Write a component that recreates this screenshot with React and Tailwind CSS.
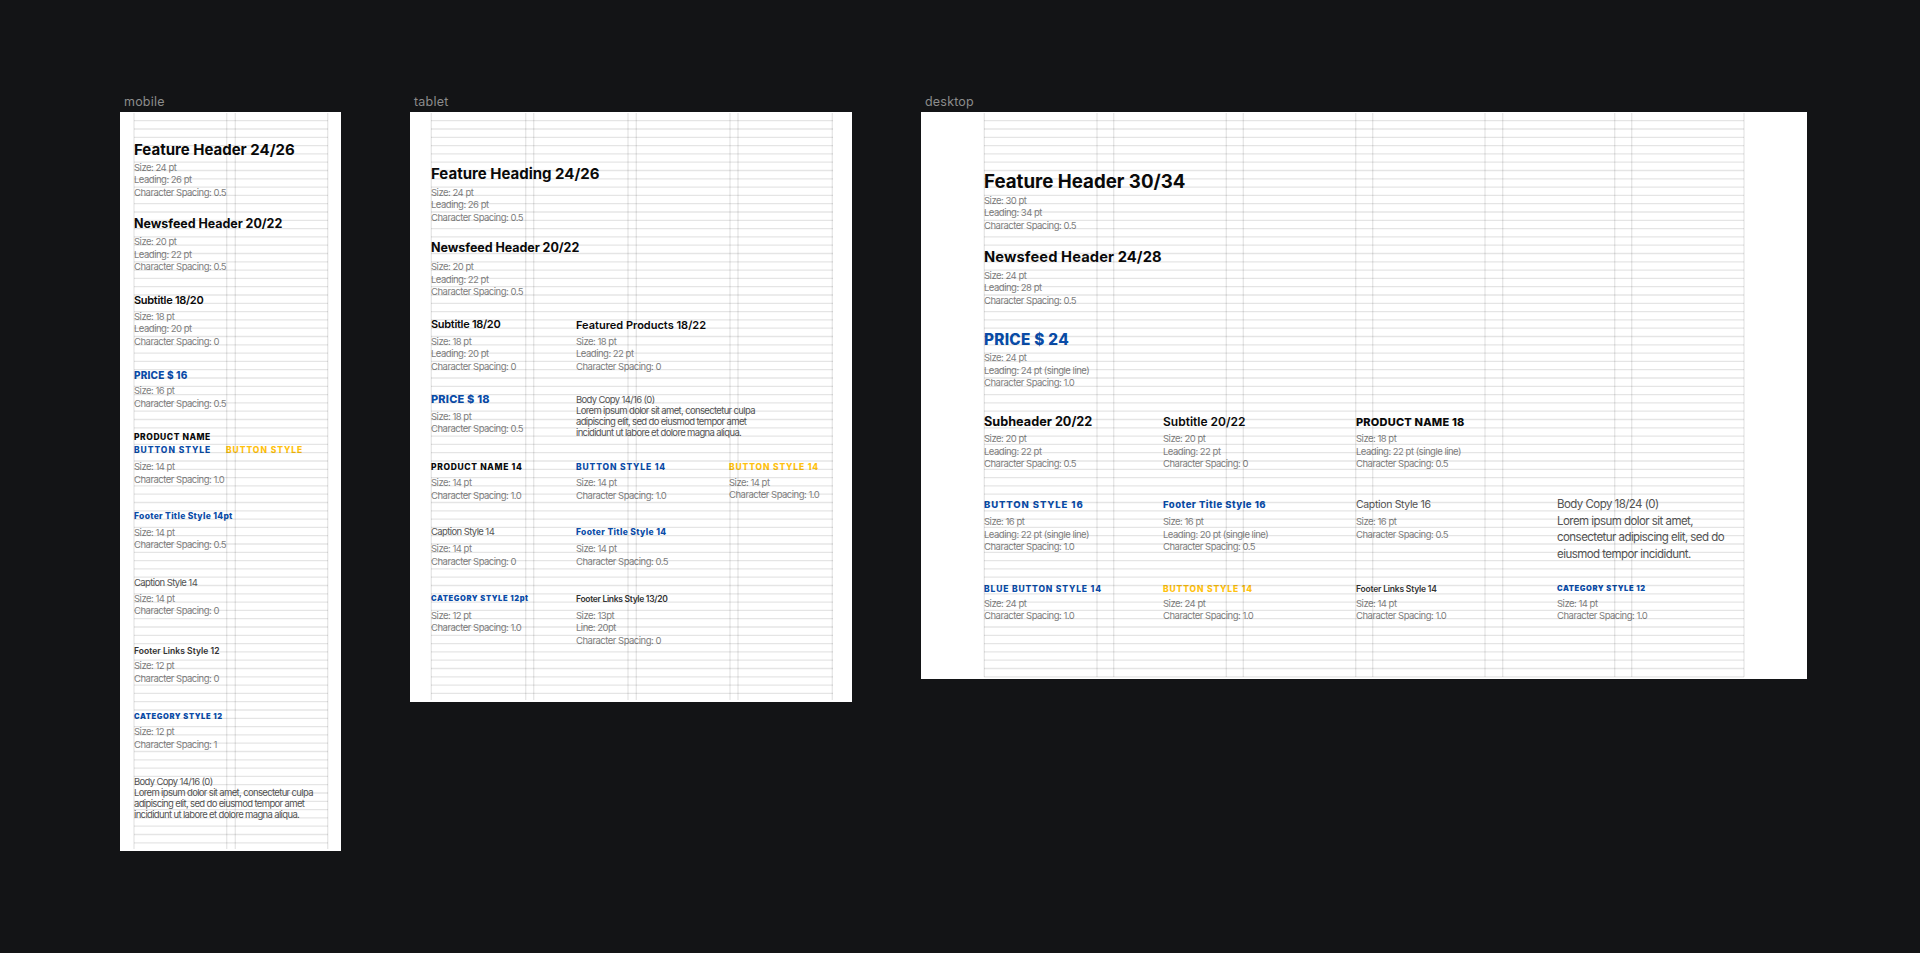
import React from 'react';

const SPEC = 'text-[9.5px] leading-[12.4px] tracking-[-0.5px] text-[#808080]';
const BODY_SM = 'whitespace-nowrap text-[9.5px] leading-[11px] tracking-[-0.65px] text-[#555]';

// Title styles, one per entry on the sheet
const feature24 = 'text-[15px] leading-[20px] font-bold text-[#0a0a0a]';
const feature30 = 'text-[18.7px] leading-[24px] font-bold text-[#0a0a0a]';
const news20 = 'text-[12.5px] leading-[20px] font-bold tracking-[-0.05px] text-[#0a0a0a]';
const news24 = 'text-[14.7px] leading-[24px] font-bold tracking-[0.1px] text-[#0a0a0a]';
const sub18 = 'text-[11px] leading-[20px] font-semibold tracking-[-0.3px] text-[#0a0a0a]';
const featured18 = 'text-[11px] leading-[20px] font-semibold text-[#0a0a0a]';
const subheader20 = 'text-[12.7px] leading-[20px] font-bold text-[#0a0a0a]';
const sub20 = 'text-[12px] leading-[20px] font-semibold text-[#0a0a0a]';
const price16 = 'text-[10px] leading-[20px] font-extrabold tracking-[0.2px] text-[#0a4ca8]';
const price18 = 'text-[11px] leading-[20px] font-extrabold tracking-[0.2px] text-[#0a4ca8]';
const price24 = 'text-[15.3px] leading-[24px] font-extrabold tracking-[0.3px] text-[#0a4ca8]';
const caps = 'text-[8.5px] leading-[13px] font-extrabold tracking-[0.55px]';
const button = 'text-[8.5px] leading-[13px] font-extrabold tracking-[0.95px]';
const caps16 = 'text-[8.5px] leading-[16px] font-extrabold tracking-[0.65px]';
const button16 = 'text-[8.5px] leading-[16px] font-extrabold tracking-[0.85px]';
const footerTitle = 'text-[8.5px] leading-[20px] font-extrabold tracking-[0.3px] text-[#0a4ca8]';
const footerTitle16 = 'text-[8.5px] leading-[16px] font-extrabold tracking-[0.35px] text-[#0a4ca8]';
const caption = 'text-[9.5px] leading-[20px] tracking-[-0.6px] text-[#555]';
const caption16 = 'text-[9.5px] leading-[16px] tracking-[-0.6px] text-[#555]';
const footerLinks = 'text-[8.5px] leading-[16px] font-semibold tracking-[0.05px] text-[#333]';
const footerLinksWide = 'text-[8.5px] leading-[16px] font-semibold tracking-[-0.3px] text-[#333]';
const footerLinksDesk = 'text-[8.5px] leading-[16px] font-semibold tracking-[-0.2px] text-[#333]';
const category = 'text-[7.5px] leading-[16px] font-black tracking-[0.6px] text-[#0a4ca8]';

function GridLines({ width, height, columns, rows, left, right }) {
  const lines = Array.from({ length: rows }, (_, i) => 8.7 + i * 8.3);
  return (
    <svg className="absolute inset-0 pointer-events-none" width={width} height={height}>
      {lines.map((y) => (
        <line key={y} x1={left} x2={right} y1={y} y2={y} stroke="#000" strokeOpacity="0.1" strokeWidth="1.3" />
      ))}
      {columns.map((x) => (
        <line key={x} x1={x} x2={x} y1={1} y2={height - 2} stroke="#000" strokeOpacity="0.1" strokeWidth="1.3" />
      ))}
    </svg>
  );
}

function Style({ title, titleClass, specs, className = '', specClass = '' }) {
  return (
    <div className={className}>
      <div className={`whitespace-nowrap ${titleClass}`}>{title}</div>
      <div className={specClass}>
        {specs.map((s, i) => (
          <div key={i} className={`whitespace-nowrap ${SPEC}`}>{s}</div>
        ))}
      </div>
    </div>
  );
}

function Mobile() {
  return (
    <div className="pl-[14px] pt-[28px]">
      <Style title="Feature Header 24/26" titleClass={feature24} specClass="mt-[2px]"
        specs={['Size: 24 pt', 'Leading: 26 pt', 'Character Spacing: 0.5']} />
      <Style title="Newsfeed Header 20/22" titleClass={news20} className="mt-[15px]" specClass="mt-[2px]"
        specs={['Size: 20 pt', 'Leading: 22 pt', 'Character Spacing: 0.5']} />
      <Style title="Subtitle 18/20" titleClass={sub18} className="mt-[16.5px]" specClass="mt-[1px]"
        specs={['Size: 18 pt', 'Leading: 20 pt', 'Character Spacing: 0']} />
      <Style title="PRICE $ 16" titleClass={price16} className="mt-[17px]"
        specs={['Size: 16 pt', 'Character Spacing: 0.5']} />
      <div className="mt-[21.2px]">
        <div className={`${caps} text-[#0a0a0a]`}>PRODUCT NAME</div>
        <div className="flex">
          <div className={`w-[92px] ${button} text-[#0a4ca8]`}>BUTTON STYLE</div>
          <div className={`${button} text-[#ffc20e]`}>BUTTON STYLE</div>
        </div>
        <div className="mt-[4px]">
          <div className={SPEC}>Size: 14 pt</div>
          <div className={SPEC}>Character Spacing: 1.0</div>
        </div>
      </div>
      <Style title="Footer Title Style 14pt" titleClass={footerTitle} className="mt-[20px]" specClass="mt-[1px]"
        specs={['Size: 14 pt', 'Character Spacing: 0.5']} />
      <Style title="Caption Style 14" titleClass={caption} className="mt-[21px]"
        specs={['Size: 14 pt', 'Character Spacing: 0']} />
      <Style title="Footer Links Style 12" titleClass={footerLinks} className="mt-[25px]" specClass="mt-[1.5px]"
        specs={['Size: 12 pt', 'Character Spacing: 0']} />
      <Style title="CATEGORY STYLE 12" titleClass={category} className="mt-[24px]" specClass="mt-[1.5px]"
        specs={['Size: 12 pt', 'Character Spacing: 1']} />
      <div className={`mt-[25px] ${BODY_SM}`}>
        <div>Body Copy 14/16 (0)</div>
        <div>Lorem ipsum dolor sit amet, consectetur culpa</div>
        <div>adipiscing elit, sed do eiusmod tempor amet</div>
        <div>incididunt ut labore et dolore magna aliqua.</div>
      </div>
    </div>
  );
}

function Tablet() {
  return (
    <div className="pl-[21px] pt-[51.7px]">
      <Style title="Feature Heading 24/26" titleClass={feature24} specClass="mt-[3px]"
        specs={['Size: 24 pt', 'Leading: 26 pt', 'Character Spacing: 0.5']} />
      <Style title="Newsfeed Header 20/22" titleClass={news20} className="mt-[14.5px]" specClass="mt-[3px]"
        specs={['Size: 20 pt', 'Leading: 22 pt', 'Character Spacing: 0.5']} />
      <div className="grid grid-cols-[145px_153px_1fr] mt-[15.4px]">
        <Style title="Subtitle 18/20" titleClass={sub18} specClass="mt-[2px]"
          specs={['Size: 18 pt', 'Leading: 20 pt', 'Character Spacing: 0']} />
        <Style title="Featured Products 18/22" titleClass={featured18} className="col-span-2 mt-[1px]" specClass="mt-[1px]"
          specs={['Size: 18 pt', 'Leading: 22 pt', 'Character Spacing: 0']} />
      </div>
      <div className="grid grid-cols-[145px_153px_1fr] mt-[16px]">
        <Style title="PRICE $ 18" titleClass={price18} specClass="mt-[1.5px]"
          specs={['Size: 18 pt', 'Character Spacing: 0.5']} />
        <div className={`col-span-2 mt-[5px] ${BODY_SM}`}>
          <div>Body Copy 14/16 (0)</div>
          <div>Lorem ipsum dolor sit amet, consectetur culpa</div>
          <div>adipiscing elit, sed do eiusmod tempor amet</div>
          <div>incididunt ut labore et dolore magna aliqua.</div>
        </div>
      </div>
      <div className="grid grid-cols-[145px_153px_1fr] mt-[20.6px]">
        <Style title="PRODUCT NAME 14" titleClass={`${caps16} text-[#0a0a0a]`} specClass="mt-[2.5px]"
          specs={['Size: 14 pt', 'Character Spacing: 1.0']} />
        <Style title="BUTTON STYLE 14" titleClass={`${button16} text-[#0a4ca8]`} specClass="mt-[2.5px]"
          specs={['Size: 14 pt', 'Character Spacing: 1.0']} />
        <Style title="BUTTON STYLE 14" titleClass={`${button16} text-[#ffc20e]`} specClass="mt-[2px]"
          specs={['Size: 14 pt', 'Character Spacing: 1.0']} />
      </div>
      <div className="grid grid-cols-[145px_153px_1fr] mt-[22.3px]">
        <Style title="Caption Style 14" titleClass={caption16} specClass="mt-[3px]"
          specs={['Size: 14 pt', 'Character Spacing: 0']} />
        <Style title="Footer Title Style 14" titleClass={footerTitle16} specClass="mt-[3px]"
          specs={['Size: 14 pt', 'Character Spacing: 0.5']} />
      </div>
      <div className="grid grid-cols-[145px_153px_1fr] mt-[23px]">
        <Style title="CATEGORY STYLE 12pt" titleClass={category} specClass="mt-[2.5px]"
          specs={['Size: 12 pt', 'Character Spacing: 1.0']} />
        <Style title="Footer Links Style 13/20" titleClass={footerLinksWide} specClass="mt-[2.5px]"
          specs={['Size: 13pt', 'Line: 20pt', 'Character Spacing: 0']} />
      </div>
    </div>
  );
}

function Desktop() {
  return (
    <div className="pl-[63px] pt-[57.7px]">
      <Style title="Feature Header 30/34" titleClass={feature30} specClass="mt-[1px]"
        specs={['Size: 30 pt', 'Leading: 34 pt', 'Character Spacing: 0.5']} />
      <Style title="Newsfeed Header 24/28" titleClass={news24} className="mt-[13.3px]" specClass="mt-[0.5px]"
        specs={['Size: 24 pt', 'Leading: 28 pt', 'Character Spacing: 0.5']} />
      <Style title="PRICE $ 24" titleClass={price24} className="mt-[20.7px]" specClass="mt-[0.5px]"
        specs={['Size: 24 pt', 'Leading: 24 pt (single line)', 'Character Spacing: 1.0']} />
      <div className="grid grid-cols-[179px_193px_201px_1fr] mt-[22.4px]">
        <Style title="Subheader 20/22" titleClass={subheader20} specClass="mt-[1.5px]"
          specs={['Size: 20 pt', 'Leading: 22 pt', 'Character Spacing: 0.5']} />
        <Style title="Subtitle 20/22" titleClass={sub20} specClass="mt-[1.5px]"
          specs={['Size: 20 pt', 'Leading: 22 pt', 'Character Spacing: 0']} />
        <Style title="PRODUCT NAME 18" titleClass="text-[11px] leading-[20px] font-extrabold tracking-[0.2px] text-[#0a0a0a]" specClass="mt-[1.5px]"
          specs={['Size: 18 pt', 'Leading: 22 pt (single line)', 'Character Spacing: 0.5']} />
      </div>
      <div className="grid grid-cols-[179px_193px_201px_1fr] mt-[25px]">
        <Style title="BUTTON STYLE 16" titleClass="text-[9.5px] leading-[20px] font-extrabold tracking-[0.9px] text-[#0a4ca8]" specClass="mt-[1px]"
          specs={['Size: 16 pt', 'Leading: 22 pt (single line)', 'Character Spacing: 1.0']} />
        <Style title="Footer Title Style 16" titleClass="text-[9.5px] leading-[20px] font-extrabold tracking-[0.5px] text-[#0a4ca8]" specClass="mt-[1px]"
          specs={['Size: 16 pt', 'Leading: 20 pt (single line)', 'Character Spacing: 0.5']} />
        <Style title="Caption Style 16" titleClass="text-[10.5px] leading-[20px] tracking-[-0.35px] text-[#555]" specClass="mt-[1px]"
          specs={['Size: 16 pt', 'Character Spacing: 0.5']} />
        <div className="mt-[0.7px] whitespace-nowrap text-[11.5px] leading-[16.6px] tracking-[-0.55px] text-[#555]">
          <div>Body Copy 18/24 (0)</div>
          <div>Lorem ipsum dolor sit amet,</div>
          <div>consectetur adipiscing elit, sed do</div>
          <div>eiusmod tempor incididunt.</div>
        </div>
      </div>
      <div className="grid grid-cols-[179px_193px_201px_1fr] mt-[18px]">
        <Style title="BLUE BUTTON STYLE 14" titleClass={`${button16} text-[#0a4ca8]`} specClass="mt-[1.5px]"
          specs={['Size: 24 pt', 'Character Spacing: 1.0']} />
        <Style title="BUTTON STYLE 14" titleClass={`${button16} text-[#ffc20e]`} specClass="mt-[1.5px]"
          specs={['Size: 24 pt', 'Character Spacing: 1.0']} />
        <Style title="Footer Links Style 14" titleClass={footerLinksDesk} specClass="mt-[1.5px]"
          specs={['Size: 14 pt', 'Character Spacing: 1.0']} />
        <Style title="CATEGORY STYLE 12" titleClass={category} specClass="mt-[1.5px]"
          specs={['Size: 14 pt', 'Character Spacing: 1.0']} />
      </div>
    </div>
  );
}

function Artboard({ label, width, height, grid, children }) {
  return (
    <div style={{ width }}>
      <div className="h-[20px] pl-[4px] text-[12.5px] leading-[20px] tracking-[0.2px] text-[#8c8c8c]">{label}</div>
      <div className="relative overflow-hidden bg-white" style={{ height }}>
        {children}
        <GridLines width={width} height={height} {...grid} />
      </div>
    </div>
  );
}

export default function App() {
  return (
    <div className="flex gap-[69px] items-start min-h-[953px] pt-[92px] pl-[120px] bg-[#131416] font-['Inter',sans-serif]">
      <Artboard label="mobile" width={221} height={739}
        grid={{ rows: 88, left: 14, right: 208, columns: [14, 106.7, 115.3, 207.7] }}>
        <Mobile />
      </Artboard>
      <Artboard label="tablet" width={442} height={590}
        grid={{ rows: 70, left: 21, right: 423, columns: [21.3, 115.7, 123.7, 218, 226.3, 320, 328, 422.3] }}>
        <Tablet />
      </Artboard>
      <Artboard label="desktop" width={886} height={567}
        grid={{ rows: 68, left: 63, right: 823, columns: [63.3, 176, 192.7, 305.3, 322.3, 434.7, 451.7, 564, 581.7, 693.7, 710.7, 823] }}>
        <Desktop />
      </Artboard>
    </div>
  );
}
